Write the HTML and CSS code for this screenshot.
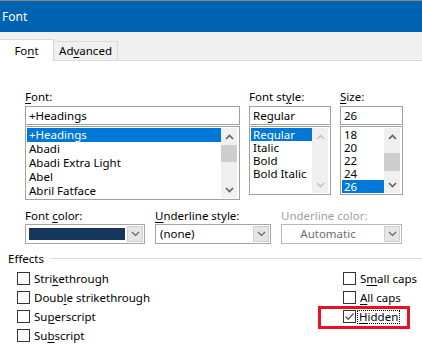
FILE: index.html
```html
<!DOCTYPE html>
<html>
<head>
<meta charset="utf-8">
<link rel="stylesheet" href="styles.css">
</head>
<body>
<div class="window">
  <div class="titlebar">Font</div>
  <div class="tabs">
    <div class="tab active">Fo<u>n</u>t</div>
    <div class="tab">Ad<u>v</u>anced</div>
  </div>
  <div class="page">
    <div class="top-grid">
      <div class="field">
        <div class="label"><u>F</u>ont:</div>
        <div class="input">+Headings</div>
        <div class="list list-font">
          <div class="items">
            <div class="item selected">+Headings</div>
            <div class="item">Abadi</div>
            <div class="item">Abadi Extra Light</div>
            <div class="item">Abel</div>
            <div class="item">Abril Fatface</div>
          </div>
          <div class="scrollbar">
            <div class="sb-btn"><svg width="9" height="6" viewBox="0 0 9 6"><path d="M1 5 L4.5 1.5 L8 5" fill="none" stroke="#606060" stroke-width="1.6"/></svg></div>
            <div class="sb-track"><div class="thumb thumb-font"></div></div>
            <div class="sb-btn"><svg width="9" height="6" viewBox="0 0 9 6"><path d="M1 1 L4.5 4.5 L8 1" fill="none" stroke="#606060" stroke-width="1.6"/></svg></div>
          </div>
        </div>
      </div>
      <div class="field">
        <div class="label">Font st<u>y</u>le:</div>
        <div class="input">Regular</div>
        <div class="list list-small">
          <div class="items">
            <div class="item selected">Regular</div>
            <div class="item">Italic</div>
            <div class="item">Bold</div>
            <div class="item">Bold Italic</div>
          </div>
          <div class="scrollbar">
            <div class="sb-btn"><svg width="9" height="6" viewBox="0 0 9 6"><path d="M1 5 L4.5 1.5 L8 5" fill="none" stroke="#c4c4c4" stroke-width="1.6"/></svg></div>
            <div class="sb-track"></div>
            <div class="sb-btn"><svg width="9" height="6" viewBox="0 0 9 6"><path d="M1 1 L4.5 4.5 L8 1" fill="none" stroke="#c4c4c4" stroke-width="1.6"/></svg></div>
          </div>
        </div>
      </div>
      <div class="field">
        <div class="label"><u>S</u>ize:</div>
        <div class="input">26</div>
        <div class="list list-small">
          <div class="items">
            <div class="item">18</div>
            <div class="item">20</div>
            <div class="item">22</div>
            <div class="item">24</div>
            <div class="item selected">26</div>
          </div>
          <div class="scrollbar">
            <div class="sb-btn"><svg width="9" height="6" viewBox="0 0 9 6"><path d="M1 5 L4.5 1.5 L8 5" fill="none" stroke="#606060" stroke-width="1.6"/></svg></div>
            <div class="sb-track"><div class="thumb thumb-size"></div></div>
            <div class="sb-btn"><svg width="9" height="6" viewBox="0 0 9 6"><path d="M1 1 L4.5 4.5 L8 1" fill="none" stroke="#606060" stroke-width="1.6"/></svg></div>
          </div>
        </div>
      </div>
    </div>

    <div class="combo-grid">
      <div class="field">
        <div class="label">Font <u>c</u>olor:</div>
        <div class="combo">
          <div class="combo-value"><div class="swatch"></div></div>
          <div class="combo-btn"><svg width="9" height="6" viewBox="0 0 9 6"><path d="M1 1 L4.5 4.5 L8 1" fill="none" stroke="#606060" stroke-width="1.1"/></svg></div>
        </div>
      </div>
      <div class="field">
        <div class="label"><u>U</u>nderline style:</div>
        <div class="combo">
          <div class="combo-value text">(none)</div>
          <div class="combo-btn"><svg width="9" height="6" viewBox="0 0 9 6"><path d="M1 1 L4.5 4.5 L8 1" fill="none" stroke="#606060" stroke-width="1.1"/></svg></div>
        </div>
      </div>
      <div class="field disabled">
        <div class="label">Underline color:</div>
        <div class="combo">
          <div class="combo-value text center">Automatic</div>
          <div class="combo-btn"><svg width="9" height="6" viewBox="0 0 9 6"><path d="M1 1 L4.5 4.5 L8 1" fill="none" stroke="#606060" stroke-width="1.1"/></svg></div>
        </div>
      </div>
    </div>

    <div class="group-head">
      <span>Effects</span>
      <div class="rule"></div>
    </div>

    <div class="effects">
      <div class="col">
        <div class="check"><span class="box"></span><span>Stri<u>k</u>ethrough</span></div>
        <div class="check"><span class="box"></span><span>Doub<u>l</u>e strikethrough</span></div>
        <div class="check"><span class="box"></span><span>Su<u>p</u>erscript</span></div>
        <div class="check"><span class="box"></span><span>Su<u>b</u>script</span></div>
      </div>
      <div class="col">
        <div class="check"><span class="box"></span><span>S<u>m</u>all caps</span></div>
        <div class="check"><span class="box"></span><span><u>A</u>ll caps</span></div>
        <div class="check hidden-opt">
          <span class="box"><svg width="11" height="11" viewBox="0 0 11 11"><path d="M1.5 5.5 L4.2 8.2 L9.5 2.5" fill="none" stroke="#555" stroke-width="1.3"/></svg></span>
          <span class="focus"><u>H</u>idden</span>
          <div class="highlight-box"></div>
        </div>
      </div>
    </div>
  </div>
</div>
</body>
</html>
```

FILE: styles.css
```css
* { box-sizing: border-box; }
html, body { margin: 0; padding: 0; background: #fff; }
body {
  font-family: "Noto Sans", "Open Sans", sans-serif;
  font-size: 11.5px;
  color: #000;
  width: 422px;
  height: 345px;
  overflow: hidden;
}
u { text-decoration: underline; text-underline-offset: 2px; text-decoration-thickness: 1px; }

.titlebar {
  height: 32px;
  border-top: 1px solid #8a8a8a;
  background: #0063b1;
  color: #fff;
  font-size: 12px;
  line-height: 31px;
  padding-left: 2px;
}

.tabs {
  display: flex;
  align-items: flex-end;
  height: 29px;
  background: #f0f0f0;
  border-bottom: 1px solid #d9d9d9;
}
.tab {
  height: 19px;
  width: 64px;
  border-top: 1px solid #d9d9d9;
  border-right: 1px solid #d9d9d9;
  text-align: center;
  line-height: 18px;
}
.tab.active {
  width: 54px;
  height: 22px;
  margin-bottom: -1px;
  background: #fff;
  line-height: 22px;
}

.page { padding: 28px 0 0 8px; }

.top-grid {
  margin-left: 17px;
  display: grid;
  grid-template-columns: 215px 82px 63px;
  column-gap: 9px;
}
.label { height: 16px; line-height: 16px; white-space: nowrap; }
.top-grid .label { margin-bottom: 1px; }
.input {
  height: 19px;
  border: 1px solid #a0a0a0;
  line-height: 17px;
  padding-left: 3px;
  margin-bottom: 1px;
}
.list {
  display: flex;
  border: 1px solid #a0a0a0;
  padding: 1px;
}
.list-font { height: 74px; }
.list-small { height: 69px; }
.items { flex: 1; min-width: 0; }
.item { height: 14px; line-height: 14px; padding-left: 2px; white-space: nowrap; overflow: hidden; }
.list-small .item { height: 13px; line-height: 13px; }
.item.selected { background: #0078d7; color: #fff; }

.scrollbar {
  width: 16px;
  margin-right: 1px;
  background: #f0f0f0;
  display: flex;
  flex-direction: column;
}
.sb-btn { height: 17px; display: flex; align-items: center; justify-content: center; }
.sb-track { flex: 1; }
.thumb { background: #cdcdcd; }
.thumb-font { height: 17px; }
.thumb-size { margin-top: 8px; height: 18px; }

.combo-grid {
  margin: 8px 0 0 17px;
  display: grid;
  grid-template-columns: 120px 116px 121px;
  column-gap: 10px;
}
.combo {
  height: 20px;
  display: flex;
  border: 1px solid #a6a6a6;
  padding: 1px;
  background: #fff;
}
.combo-value { flex: 1; display: flex; align-items: center; padding: 1px 2px; }
.combo-value.text { padding-left: 3px; line-height: 16px; }
.combo-value.center { justify-content: center; padding-right: 14px; }
.swatch { width: 96px; height: 12px; background: #17365d; }
.combo-btn {
  width: 16px;
  background: #e5e5e5;
  border: 1px solid #cfcfcf;
  display: flex;
  align-items: center;
  justify-content: center;
}
.disabled .label { color: #a0a0a0; }
.disabled .combo-value { color: #6d6d6d; }
.disabled .combo { border-color: #b8b8b8; }

.group-head {
  margin-top: 6px;
  display: flex;
  align-items: center;
  height: 16px;
}
.group-head .rule { flex: 1; height: 1px; background: #dcdcdc; margin-left: 6px; }

.effects {
  margin: 3px 0 0 9px;
  display: grid;
  grid-template-columns: 326px 1fr;
}
.check { height: 19px; display: flex; align-items: center; white-space: nowrap; }
.box {
  width: 13px;
  height: 13px;
  border: 1px solid #333;
  background: #fff;
  margin-right: 4px;
  display: flex;
  align-items: center;
  justify-content: center;
}
.hidden-opt { position: relative; }
.focus { outline: 1px dotted #000; outline-offset: 0; padding: 0 1px; line-height: 12px; margin-left: -2px; }
.highlight-box {
  position: absolute;
  left: -25px;
  top: -1px;
  width: 92px;
  height: 23px;
  border: 3px solid #e81123;
}
```
